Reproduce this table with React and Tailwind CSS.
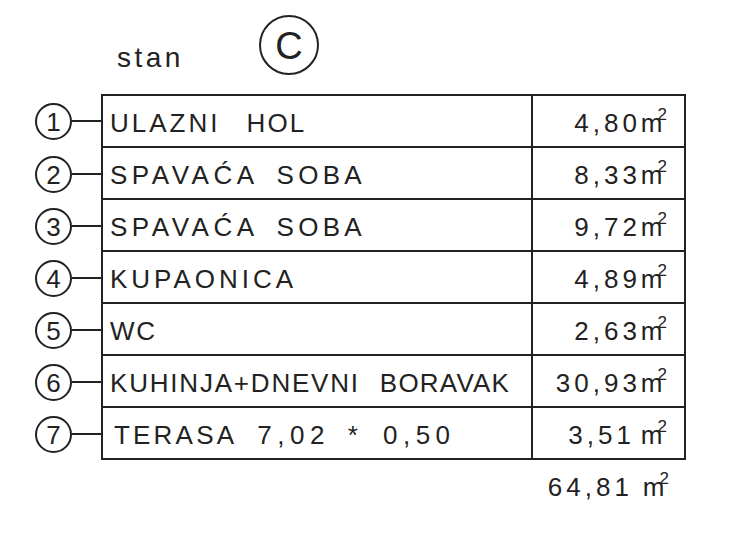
import React from "react";

const rows = [
  {
    words: [
      { w: "ULAZNI", c: "tracking-[3px] mr-[26px]" },
      { w: "HOL", c: "tracking-[2.2px]" },
    ],
    val: "4,80",
    sp: false,
  },
  {
    words: [
      { w: "SPAVAĆA", c: "tracking-[4.5px] mr-[18px]" },
      { w: "SOBA", c: "tracking-[4.3px]" },
    ],
    val: "8,33",
    sp: false,
  },
  {
    words: [
      { w: "SPAVAĆA", c: "tracking-[4.5px] mr-[18px]" },
      { w: "SOBA", c: "tracking-[4.3px]" },
    ],
    val: "9,72",
    sp: false,
  },
  { words: [{ w: "KUPAONICA", c: "tracking-[4px]" }], val: "4,89", sp: false },
  { words: [{ w: "WC", c: "tracking-[1.7px]" }], val: "2,63", sp: false },
  {
    words: [
      { w: "KUHINJA+DNEVNI", c: "tracking-[1.8px] mr-[20px]" },
      { w: "BORAVAK", c: "tracking-[1.2px]" },
    ],
    val: "30,93",
    sp: false,
  },
  {
    words: [
      { w: "TERASA", c: "ml-[4px] tracking-[3.2px] mr-[20px]" },
      { w: "7,02", c: "tracking-[5.5px] mr-[18px]" },
      { w: "*", c: "mr-[25px]" },
      { w: "0,50", c: "tracking-[5.5px]" },
    ],
    val: "3,51",
    sp: true,
  },
];

function Sq() {
  return (
    <span className="inline-flex items-baseline tracking-normal">
      <span className="text-[26px] tracking-[-1px]">m</span>
      <span className="relative -top-[12px] -ml-[4px] text-[17px]">2</span>
    </span>
  );
}

export default function App() {
  return (
    <div className="w-[740px] h-[550px] bg-white text-[#222] font-['Liberation_Sans',Arial,sans-serif] overflow-hidden">
      <div className="flex items-start h-[94px]">
        <span className="ml-[117px] mt-[44px] text-[28px] leading-none tracking-[3.5px]">stan</span>
        <div className="ml-[75px] mt-[15px] w-[60px] h-[60px] rounded-full border-2 border-[#222] flex items-center justify-center text-[38px] leading-none pt-[2px]">
          C
        </div>
      </div>
      <div className="flex flex-col">
        {rows.map((r, i) => (
          <div key={i} className={`flex ${i === 0 ? "h-[54px]" : "h-[52px]"}`}>
            <div className="w-[101px] flex items-center pl-[35px]">
              <div className="w-[37px] h-[37px] shrink-0 rounded-full border-2 border-[#222] flex items-center justify-center text-[26px] leading-none pt-[1px]">
                {i + 1}
              </div>
              <div className="flex-1 h-[2px] bg-[#222]"></div>
            </div>
            <div className={`flex w-[585px] border-x-2 border-b-2 border-[#222] ${i === 0 ? "border-t-2" : ""}`}>
              <div className="w-[430px] border-r-2 border-[#222] flex items-center pl-[7px] pt-[4px] text-[26px] leading-none whitespace-nowrap">
                {r.words.map((wd, j) => (
                  <span key={j} className={wd.c}>
                    {wd.w}
                  </span>
                ))}
              </div>
              <div className="flex-1 flex items-center justify-end pr-[17px] pt-[4px] text-[26px] leading-none tracking-[4px] whitespace-nowrap">
                <span>{r.val}</span>
                {r.sp ? <span className="w-[6px]"></span> : null}
                <Sq />
              </div>
            </div>
          </div>
        ))}
      </div>
      <div className="flex justify-end w-[686px] pr-[17px] mt-[14px] text-[26px] leading-none tracking-[4px]">
        <span>64,81</span>
        <span className="w-[10px]"></span>
        <Sq />
      </div>
    </div>
  );
}
